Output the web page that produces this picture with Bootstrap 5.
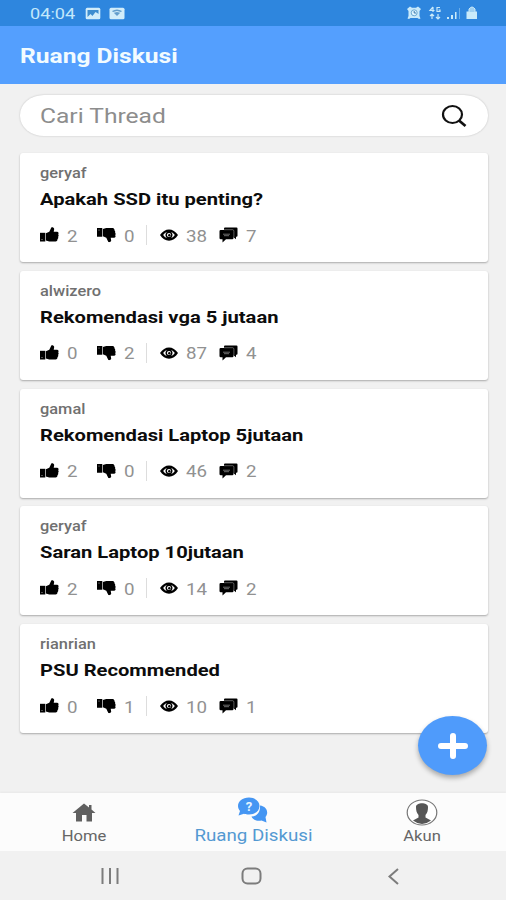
<!DOCTYPE html>
<html lang="id">
<head>
<meta charset="utf-8">
<meta name="viewport" content="width=device-width, initial-scale=1">
<title>Ruang Diskusi</title>
<link href="https://cdn.jsdelivr.net/npm/bootstrap@5.3.0/dist/css/bootstrap.min.css" rel="stylesheet">
<style>
body{font-family:Roboto,"Liberation Sans",sans-serif;background:#f1f1f1;width:506px;height:900px;overflow:hidden}
svg{display:block;flex:none}
.wide{display:inline-block;white-space:nowrap;transform:scaleX(1.17);transform-origin:0 50%}
.wide-mid{transform-origin:50% 50%}
.status{height:26px;background:#2e86de;color:#c3e8fb;padding:0 27px 0 30px}
.clock{width:55px;font-size:15.5px;line-height:26px;padding-top:1px}
.appbar{height:58px;background:#549ffe;padding-left:20px}
.appbar h1{font-size:21px;font-weight:700;line-height:60px;color:#f2fbff;margin:0}
.search{height:41px;margin:11px 18px 0 20px;background:#fff;border-radius:24px/20px;padding:0 21px 0 20px;box-shadow:0 0 2px rgba(0,0,0,.22)}
.search .wide{font-size:21px;color:#8d8d8d;padding-top:2px}
.threads{margin:17px 18px 0 20px;gap:8.75px}
.thread{height:109px;border:0;border-radius:3px;background:#fff;box-shadow:0 1px 2px rgba(0,0,0,.3);padding:11px 20px 0}
.author{font-size:14px;line-height:19px;color:#707070;font-weight:500}
.topic{font-size:17px;line-height:22px;font-weight:700;color:#0c0c0c;margin:5px 0 0}
.topic .wide{transform:scaleX(1.185)}
.stats{height:20px;margin-top:15px}
.stats .wide{font-size:16px;line-height:20px;color:#919191;padding-top:3px}
.s-up{width:57px}.s-down{width:49px}.s-view{width:59px;margin-left:13px}
.gap-n{margin-left:8px}
.rule{width:1px;height:20px;background:#ddd}
.fab{position:absolute;left:418px;top:716px;width:69px;height:59px;border:0;border-radius:50%;background:#4f9bfb;box-shadow:0 3px 5px rgba(0,0,0,.3)}
.tabs{height:58px;background:#fcfcfc;color:#666;box-shadow:0 -1px 2px rgba(0,0,0,.04)}
.tab-item .wide{font-size:14.200px;line-height:20px}
.tab-item.on{color:#5399d2}
.tab-item.on .wide{font-size:16px}
.tab-icon{height:31px}
.sysbar{height:49px;background:#f1f1f1;color:#7c7c7c}
</style>
<script src="https://cdn.jsdelivr.net/npm/bootstrap@5.3.0/dist/js/bootstrap.bundle.min.js"></script>
</head>
<body class="d-flex flex-column position-relative">
<svg width="0" height="0" class="position-absolute" aria-hidden="true">
<symbol id="up" viewBox="0 0 19 16"><path d="M0 5.800h5.300v8.700H0z"/><path d="M5.900 6.200 9.300 4.800 11.200.8c.3-.8 2.800-.6 3 1.200L13.700 4.800h3.300c1.600 0 2 1.700 1.200 2.500.7.8.5 1.900-.1 2.400.4 1 0 2-.6 2.300.1 1.400-.6 2.500-1.900 2.500H9.200L5.900 13.500z"/><circle cx="2" cy="12.500" r=".6" fill="#aaa"/></symbol>
<symbol id="eye" viewBox="0 0 18 12"><path fill-rule="evenodd" d="M0 6C4.600-1.500 13.400-1.500 18 6 13.400 13.500 4.600 13.500 0 6zm3.200 0c1 1.500 2.200 2.500 3.600 3-1.800-1.800-1.800-4.200 0-6C5.400 3.500 4.200 4.500 3.200 6zm11.600 0c-1-1.500-2.200-2.500-3.600-3 1.800 1.800 1.800 4.200 0 6 1.400-.5 2.600-1.500 3.600-3z"/><circle cx="9" cy="6" r="2.100" fill="#fff"/><circle cx="9.300" cy="6.200" r="1.200"/></symbol>
<symbol id="chat" viewBox="0 0 19 16"><path d="M6 .5h11.500q1 0 1 1v7.200q0 1-1 1H17v2.500l-3-2.500H6q-1 0-1-1V1.500q0-1 1-1z"/><path d="M1.700 3h11.600q1.200 0 1.200 1.200v6.800q0 1.200-1.200 1.200H7L3.500 15.500v-3.300H1.700Q.5 12.200.5 11V4.200Q.5 3 1.700 3z"/><path d="M5 2.700h8.800q1.100.2 1.100 1.500v6" stroke="#999" stroke-width=".6" fill="none"/><path d="M4 7.200h7M5 8.700h5" stroke="#999" stroke-width=".7"/></symbol>
</svg>
<header>
<div class="status d-flex align-items-center">
<div class="clock"><span class="wide">04:04</span></div>
<svg class="me-2" width="16" height="13" viewBox="0 0 16 13"><rect x=".7" y=".7" width="14.600" height="11.600" rx="1.500" fill="#d2edfa"/><path d="M2.500 10V3h11v4l-3-2-3 4-2-2z" fill="#3e8dcf"/><path d="m8 9 3-3 2.500 2" stroke="#d2edfa" fill="none"/></svg>
<svg width="16" height="13" viewBox="0 0 16 13"><rect x=".5" y=".7" width="15" height="11.600" rx="1.500" fill="#d2edfa"/><path d="M3 4q5-3 10 0L8 9z" fill="#629dcc"/><path d="M4 5.500q4-2 8 0" stroke="#d2edfa" fill="none"/></svg>
<svg class="ms-auto" width="73" height="16" viewBox="0 0 73 16" fill="#c9eafa"><path d="M1 4 4 1.500l2 1.200h4l2-1.200L15 4l-1.500 2v5l1 2.500-1.500.5-1.500-1H4.500L3 14l-1.500-.5 1-2.500V6z"/><circle cx="8.200" cy="7.800" r="3" fill="#dff5ff" stroke="#6ba8d2"/><path d="M8.200 6v2h2" stroke="#3978aa" fill="none"/><path d="M27 2l-3 3.500h4.500M27 2v5M34 2.500h-3v4h3V5h-1.500M26 9v5m-2-3 2-2 2 2M32 9v5m-2-2 2 2 2-2" fill="none" stroke="#c9eafa" stroke-width="1.200"/><path d="M41 12h2v2h-2zM45 10h2v4h-2zM49 7h1.500v7H49z"/><path d="M53 3h1v11h-1z" opacity=".4"/><path d="M60.500 6.500h10.500V14H60.500z"/><path d="M63 7V4q3-4 6 0v3" fill="#9fd0f1" stroke="#c9eafa"/></svg>
</div>
<div class="appbar"><h1><span class="wide">Ruang Diskusi</span></h1></div>
</header>
<main>
<div class="search d-flex align-items-center justify-content-between"><span class="wide">Cari Thread</span>
<svg width="26" height="24" viewBox="0 0 26 24" fill="none" stroke="#111" stroke-width="2.200"><ellipse cx="11.500" cy="10.500" rx="9.500" ry="8.500"/><path d="m18 16.500 6.500 5.500" stroke-width="2.700"/></svg></div>
<div class="threads d-flex flex-column" id="threads"></div>
</main>
<button class="fab d-flex align-items-center justify-content-center p-0" aria-label="Tambah"><svg width="30" height="26" viewBox="0 0 30 26"><path d="M3 13h24M15 3v20" stroke="#fff" stroke-width="6" stroke-linecap="round"/></svg></button>
<footer class="mt-auto">
<nav class="tabs row g-0 text-center">
<div class="tab-item col-4"><div class="tab-icon d-flex align-items-center justify-content-center pt-2"><svg width="24" height="19" viewBox="0 0 24 19" fill="#606060"><path d="M12 .5.500 10H4v8.500h6V12h4.500v6.500H20V10h3.500L19.500 6.500V2H17v2.500z"/></svg></div><span class="wide wide-mid">Home</span></div>
<div class="tab-item col-4 on"><div class="tab-icon d-flex align-items-center justify-content-center pt-1"><svg width="32" height="27" viewBox="0 0 32 27" fill="#4596f3"><path d="M23 8.500c7 1 9 7 5.500 11.500l1 5.500-5-2c-5 1-9-1-10-4 5 0 9-4 8.500-11z"/><path d="M12 .5c14 0 14 17 0 17-2 0-3.500 0-5-.7L1.500 18.500 3 14C-2 8 3 .5 12 .5z"/><text x="12" y="13.500" text-anchor="middle" font-size="13" font-weight="700" font-family="Roboto,sans-serif" fill="#e8f6ff">?</text></svg></div><span class="wide wide-mid">Ruang Diskusi</span></div>
<div class="tab-item col-4"><div class="tab-icon d-flex align-items-center justify-content-center pt-2"><svg width="32" height="27" viewBox="0 0 32 27"><ellipse cx="16" cy="13.500" rx="14.800" ry="12.500" fill="#fff" stroke="#777" stroke-width="1.200"/><path d="M10 8c0-5 12-5 12 0 0 3-.5 6-2.500 8v2.500l5.500 3q-9 7-18 0l5.500-3V16C10.500 14 10 11 10 8z" fill="#565656"/></svg></div><span class="wide wide-mid">Akun</span></div>
</nav>
<div class="sysbar"><svg width="506" height="49" viewBox="0 0 506 49" fill="none" stroke="#7c7c7c" stroke-width="2"><path d="M102.500 17v16M110 17v16M117.500 17v16"/><rect x="242.500" y="17.500" width="18" height="15" rx="5"/><path d="m398 18-8.500 7.500 8.500 7.500"/></svg></div>
</footer>
<script>
const threads=[
["geryaf","Apakah SSD itu penting?",2,0,38,7],
["alwizero","Rekomendasi vga 5 jutaan",0,2,87,4],
["gamal","Rekomendasi Laptop 5jutaan",2,0,46,2],
["geryaf","Saran Laptop 10jutaan",2,0,14,2],
["rianrian","PSU Recommended",0,1,10,1]];
const num=n=>`<span class="wide gap-n">${n}</span>`;
document.getElementById("threads").innerHTML=threads.map(([a,t,u,d,v,c])=>`
<article class="thread card"><div class="author"><span class="wide">${a}</span></div><h2 class="topic"><span class="wide">${t}</span></h2>
<div class="stats d-flex align-items-center">
<div class="s-up d-flex align-items-center"><svg width="19" height="16"><use href="#up"/></svg>${num(u)}</div>
<div class="s-down d-flex align-items-center"><svg width="19" height="16" viewBox="0 0 19 16"><g transform="matrix(1 0 0 -1 0 15.500)"><use href="#up" width="19" height="16"/></g></svg>${num(d)}</div>
<span class="rule"></span>
<div class="s-view d-flex align-items-center"><svg width="18" height="12"><use href="#eye"/></svg>${num(v)}</div>
<div class="d-flex align-items-center"><svg width="19" height="16"><use href="#chat"/></svg>${num(c)}</div>
</div></article>`).join("");
</script>
</body>
</html>
